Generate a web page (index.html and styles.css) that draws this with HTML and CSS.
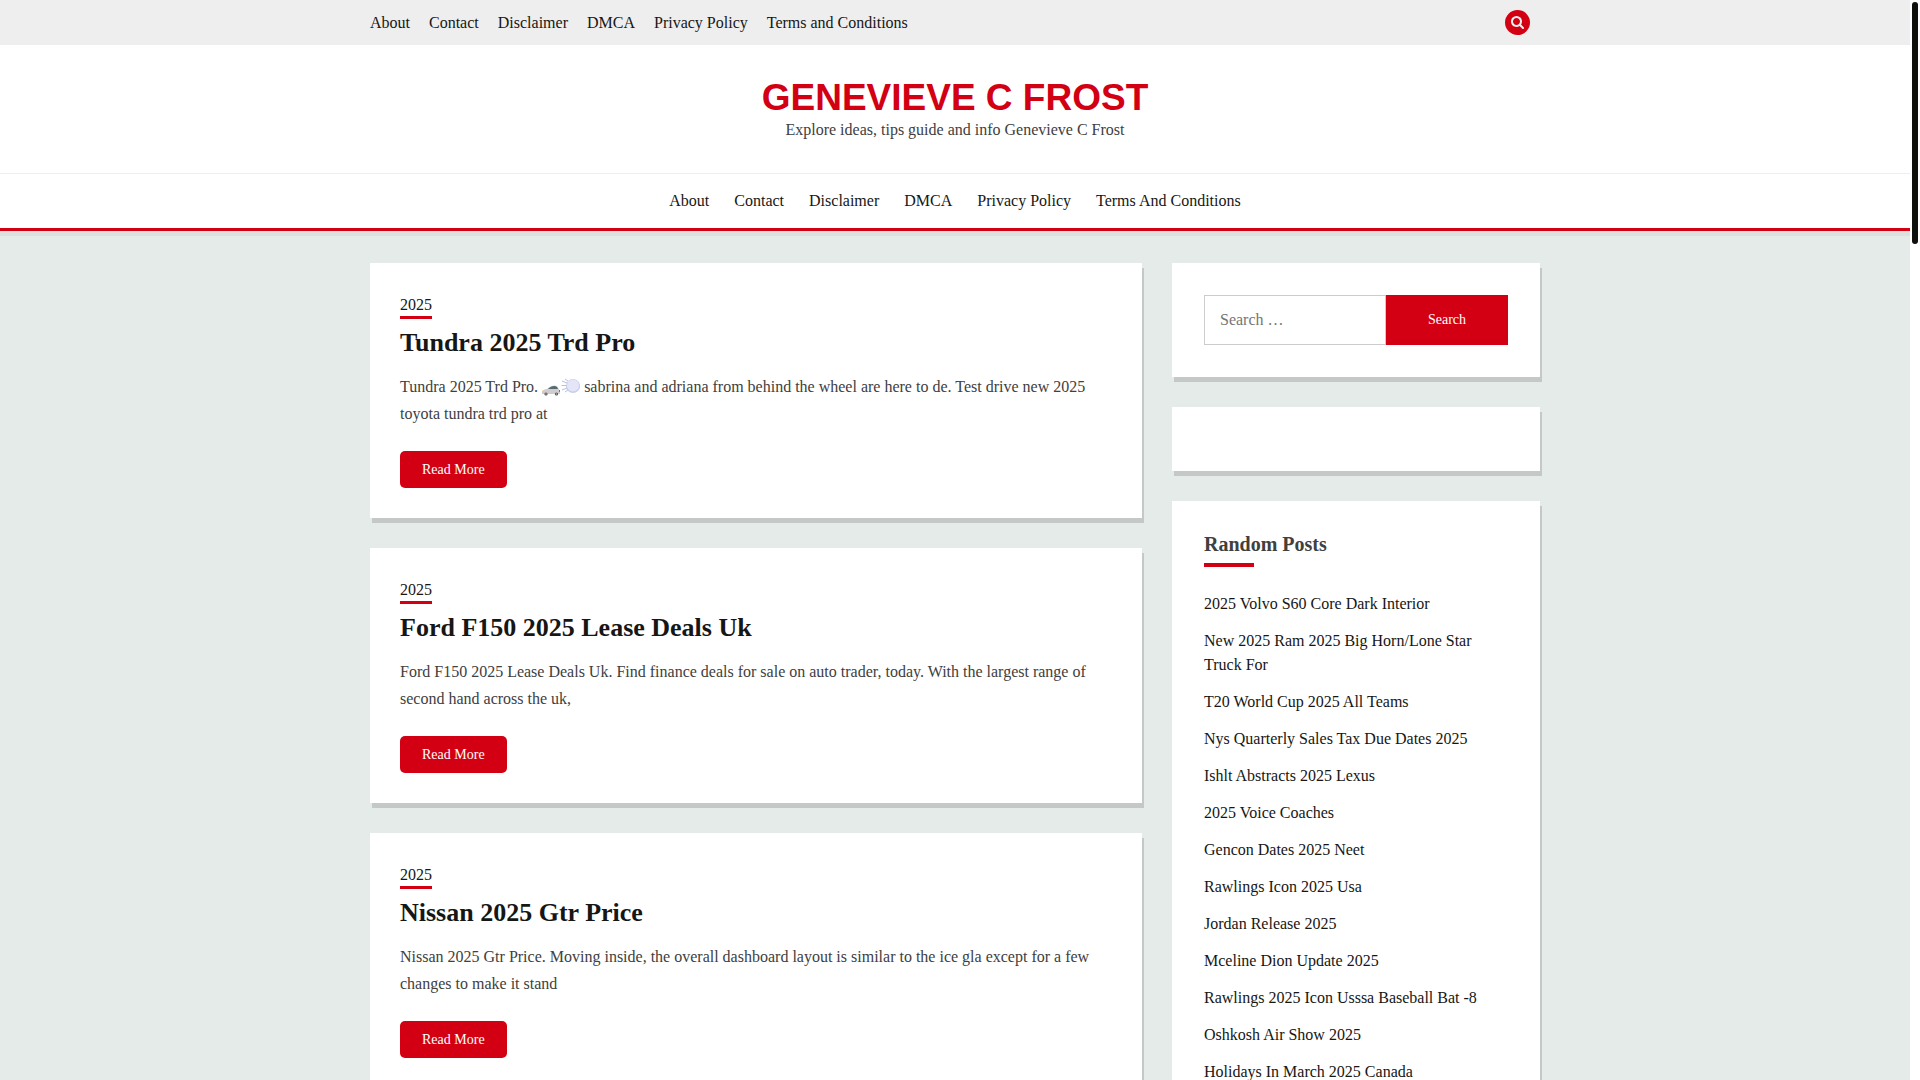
FILE: index.html
```html
<!DOCTYPE html>
<html lang="en">
<head>
    <meta charset="utf-8">
    <meta name="viewport" content="width=device-width, initial-scale=1">
    <title>Genevieve C Frost</title>
    <link rel="stylesheet" href="styles.css">
</head>
<body>
<div class="page">

    <div class="top-bar">
        <div class="container">
            <nav class="top-menu" aria-label="Top menu">
                <a href="#">About</a>
                <a href="#">Contact</a>
                <a href="#">Disclaimer</a>
                <a href="#">DMCA</a>
                <a href="#">Privacy Policy</a>
                <a href="#">Terms and Conditions</a>
            </nav>
            <button type="button" class="search-toggle" aria-label="Open search">
                <svg viewBox="64 128 1664 1664" width="13" height="13" fill="currentColor"><path d="M1216 832q0-185-131.500-316.500t-316.500-131.500-316.500 131.500-131.500 316.500 131.500 316.500 316.500 131.500 316.500-131.500 131.500-316.500zm512 832q0 52-38 90t-90 38q-54 0-90-38l-343-342q-179 124-399 124-143 0-273.500-55.500t-225-150-150-225-55.500-273.500 55.500-273.500 150-225 225-150 273.500-55.500 273.500 55.500 225 150 150 225 55.500 273.500q0 220-124 399l343 343q37 37 37 90z"/></svg>
            </button>
        </div>
    </div>

    <header class="site-header">
        <div class="site-branding">
            <h1 class="site-title"><a href="#">GENEVIEVE C FROST</a></h1>
            <p class="site-description">Explore ideas, tips guide and info Genevieve C Frost</p>
        </div>
        <nav class="main-menu" aria-label="Main menu">
            <a href="#">About</a>
            <a href="#">Contact</a>
            <a href="#">Disclaimer</a>
            <a href="#">DMCA</a>
            <a href="#">Privacy Policy</a>
            <a href="#">Terms And Conditions</a>
        </nav>
    </header>

    <div class="container content">
        <main class="posts">
            <article class="card post">
                <a href="#" class="post-category">2025</a>
                <h2 class="post-title"><a href="#">Tundra 2025 Trd Pro</a></h2>
                <p>Tundra 2025 Trd Pro. <svg class="emoji" viewBox="0 0 38 20" role="img" aria-label="car driving off">
                    <!-- car -->
                    <path d="M0 16v-2.500q1-2 5-2.500l2.500-2q2-1.500 5-1.500 3 0 4.500 4l1 1v3q0 .500-1 .500H1z" fill="#cfcdcd"/>
                    <path d="M6 11l2.500-2q1.500-1 4-1 2.500 0 3.500 3z" fill="#566b76"/>
                    <path d="M0 13l2-1v1.500H0z" fill="#f3d94e"/>
                    <path d="M17 12h1v2h-1z" fill="#d0534e"/>
                    <circle cx="4" cy="16" r="1.600" fill="#5b4b4b"/>
                    <circle cx="14.500" cy="16" r="1.600" fill="#5b4b4b"/>
                    <circle cx="4" cy="16" r=".7" fill="#bbb"/>
                    <circle cx="14.500" cy="16" r=".7" fill="#bbb"/>
                    <!-- puff -->
                    <circle cx="31" cy="8" r="7" fill="#c9cdea"/>
                    <circle cx="34.500" cy="8" r="3.500" fill="#c9cdea"/>
                    <circle cx="31" cy="7.500" r="6" fill="#e4e6f8"/>
                    <path d="M20 3l5 2M19.500 7.500h5M20 12l5-2M23 1l3 2M23 14l3-2" stroke="#b9bee4" stroke-width="1" fill="none"/>
                </svg> sabrina and adriana from behind the wheel are here to de. Test drive new 2025 toyota tundra trd pro at</p>
                <a href="#" class="read-more">Read More</a>
            </article>
            <article class="card post">
                <a href="#" class="post-category">2025</a>
                <h2 class="post-title"><a href="#">Ford F150 2025 Lease Deals Uk</a></h2>
                <p>Ford F150 2025 Lease Deals Uk. Find finance deals for sale on auto trader, today. With the largest range of second hand across the uk,</p>
                <a href="#" class="read-more">Read More</a>
            </article>
            <article class="card post">
                <a href="#" class="post-category">2025</a>
                <h2 class="post-title"><a href="#">Nissan 2025 Gtr Price</a></h2>
                <p>Nissan 2025 Gtr Price. Moving inside, the overall dashboard layout is similar to the ice gla except for a few changes to make it stand</p>
                <a href="#" class="read-more">Read More</a>
            </article>
        </main>

        <aside class="sidebar">
            <section class="card widget">
                <form class="search-form" role="search">
                    <input type="search" placeholder="Search …" aria-label="Search for">
                    <button type="submit">Search</button>
                </form>
            </section>
            <section class="card widget"></section>
            <section class="card widget">
                <h2 class="widget-title">Random Posts</h2>
                <ul class="post-list">
                    <li><a href="#">2025 Volvo S60 Core Dark Interior</a></li>
                    <li><a href="#">New 2025 Ram 2025 Big Horn/Lone Star Truck For</a></li>
                    <li><a href="#">T20 World Cup 2025 All Teams</a></li>
                    <li><a href="#">Nys Quarterly Sales Tax Due Dates 2025</a></li>
                    <li><a href="#">Ishlt Abstracts 2025 Lexus</a></li>
                    <li><a href="#">2025 Voice Coaches</a></li>
                    <li><a href="#">Gencon Dates 2025 Neet</a></li>
                    <li><a href="#">Rawlings Icon 2025 Usa</a></li>
                    <li><a href="#">Jordan Release 2025</a></li>
                    <li><a href="#">Mceline Dion Update 2025</a></li>
                    <li><a href="#">Rawlings 2025 Icon Usssa Baseball Bat -8</a></li>
                    <li><a href="#">Oshkosh Air Show 2025</a></li>
                    <li><a href="#">Holidays In March 2025 Canada</a></li>
                </ul>
            </section>
        </aside>
    </div>

</div>
<div class="scroll-track" aria-hidden="true"><div class="scroll-thumb"></div></div>
</body>
</html>
```
FILE: styles.css
```css
* {
    box-sizing: border-box;
}

body {
    display: flex;
    height: 100vh;
    margin: 0;
    font-family: "Liberation Serif", "Times New Roman", serif;
    font-size: 16px;
    line-height: 24px;
    color: #404040;
    background-color: #e5ebe8;
}

h1, h2, p, ul {
    margin: 0;
    padding: 0;
}

a {
    color: #161614;
    text-decoration: none;
}

/* the page scrolls inside its own box, the bar is drawn beside it */
.page {
    flex: 1;
    min-width: 0;
    overflow-y: auto;
    scrollbar-width: none;
}

.scroll-track {
    width: 10px;
    padding: 2px;
    background-color: #fff;
}

.scroll-thumb {
    height: 242px;
    background-color: #0f0f0c;
    border-radius: 3px;
}

.container {
    max-width: 1170px;
    margin: 0 auto;
}

/* top bar */
.top-bar {
    background-color: #eee;
}

.top-bar .container {
    display: flex;
    justify-content: space-between;
    align-items: center;
    min-height: 45px;
    padding-right: 10px;
}

.top-menu {
    display: flex;
    flex-wrap: wrap;
    gap: 0 19px;
}

.search-toggle {
    display: flex;
    align-items: center;
    justify-content: center;
    width: 25px;
    height: 25px;
    padding: 0;
    border: none;
    border-radius: 50%;
    color: #eee;
    background-color: #d30014;
    cursor: pointer;
}

/* header */
.site-header {
    background-color: #fff;
    border-bottom: 3px solid #d30014;
    box-shadow: 0 5px 0 rgba(0, 0, 0, 0.04);
}

.site-branding {
    padding: 32px 0 31px;
    text-align: center;
}

.site-title {
    font-family: "Liberation Sans", Arial, sans-serif;
    font-size: 37px;
    line-height: 41px;
}

.site-title a {
    color: #d30014;
}

.main-menu {
    display: flex;
    flex-wrap: wrap;
    justify-content: center;
    gap: 0 25px;
    padding: 15px 0;
    border-top: 1px solid #eee;
}

/* content */
.content {
    display: grid;
    grid-template-columns: minmax(0, 1fr) 368px;
    gap: 30px;
    align-items: start;
    padding: 32px 0;
}

.posts,
.sidebar {
    display: grid;
    grid-template-columns: minmax(0, 1fr);
    gap: 30px;
}

.card {
    background-color: #fff;
    box-shadow: 2px 5px 0 rgba(0, 0, 0, 0.14);
}

.post {
    padding: 30px;
}

.post-category {
    display: block;
    width: fit-content;
    line-height: 23px;
    border-bottom: 3px solid #d30014;
}

.post-title {
    margin: 6px 0 12px;
    font-size: 26px;
    line-height: 36px;
}

.post p {
    line-height: 27px;
}

.emoji {
    width: 38px;
    height: 20px;
    vertical-align: -6px;
}

.read-more {
    display: block;
    width: fit-content;
    margin-top: 24px;
    padding: 0 22px;
    font-size: 14px;
    line-height: 37px;
    color: #fff;
    background-color: #d30014;
    border-radius: 5px;
}

/* sidebar */
.widget {
    padding: 32px;
}

.search-form {
    display: flex;
}

.search-form input {
    flex: 1;
    min-width: 0;
    height: 50px;
    padding: 0 15px;
    font: inherit;
    border: 1px solid #ccc;
    border-radius: 0;
    appearance: none;
}

.search-form button {
    width: 122px;
    font-family: inherit;
    font-size: 14px;
    color: #fff;
    background-color: #d30014;
    border: none;
    cursor: pointer;
}

.widget-title {
    font-size: 20px;
    line-height: 22px;
}

.widget-title::after {
    content: "";
    display: block;
    width: 50px;
    height: 4px;
    margin: 8px 0 25px;
    background-color: #d30014;
}

.post-list {
    list-style: none;
}

.post-list li {
    margin-bottom: 13px;
}

@media (max-width: 1200px) {
    .container {
        padding-left: 15px;
        padding-right: 15px;
    }
}

@media (max-width: 800px) {
    .content {
        grid-template-columns: minmax(0, 1fr);
    }
}
```
